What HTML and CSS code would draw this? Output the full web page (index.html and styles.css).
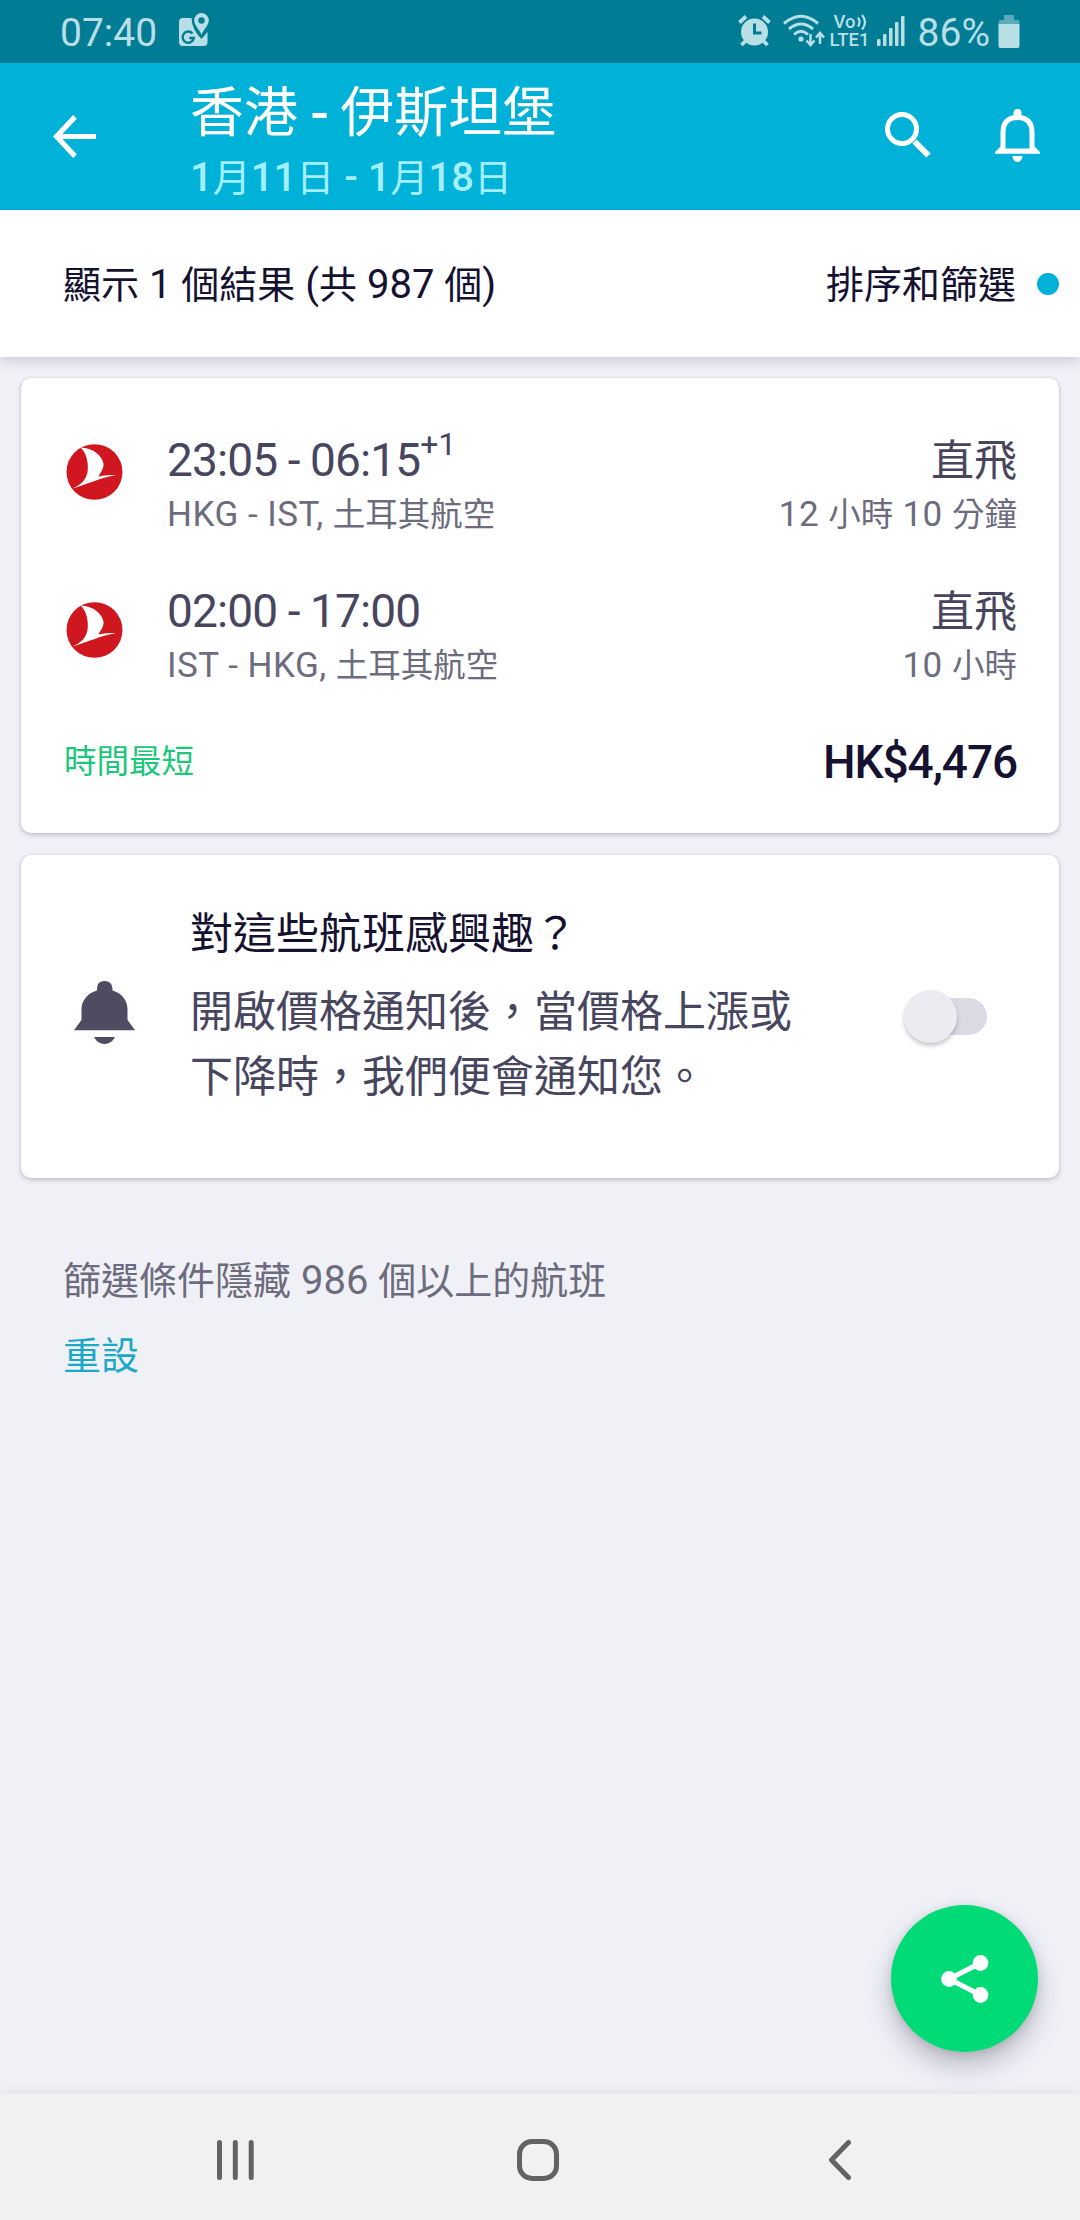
FILE: index.html
```html
<!DOCTYPE html>
<html lang="zh-Hant">
<head>
<meta charset="utf-8">
<title>香港 - 伊斯坦堡</title>
<link rel="stylesheet" href="styles.css">
</head>
<body>
<div class="screen">
  <div class="statusbar">
    <span class="clock">07:40</span>
    <svg class="ic-maps" width="32" height="38" viewBox="0 0 32 38" fill="currentColor">
      <path d="M4 5H12.500Q13 17 22.500 26L28.500 19V29Q28.500 33 25 33H4Q0 33 0 29V9Q0 5 4 5Z"/>
      <path d="M13.500 20.500A5.600 5.600 0 1 0 14.800 25H10.300" fill="none" stroke="#007c95" stroke-width="2.400"/>
      <path fill-rule="evenodd" d="M22.500 0A7.300 7.300 0 0 1 29.800 7.300C29.800 13 24.500 16 22.500 22C20.500 16 15.200 13 15.200 7.300A7.300 7.300 0 0 1 22.500 0ZM22.500 4.300A3.200 3.200 0 1 0 22.500 10.700A3.200 3.200 0 1 0 22.500 4.300Z"/>
    </svg>
    <div class="status-right">
      <svg class="ic-alarm" width="33" height="32" viewBox="0 0 33 32">
        <g fill="none" stroke="currentColor" stroke-width="3.800">
          <path d="M1.500 7.500L8 1.500M31.500 7.500L25 1.500M7.500 26L3.500 30M25.500 26L29.500 30"/>
        </g>
        <circle cx="16.500" cy="17" r="13.500" fill="currentColor"/>
        <path d="M16.500 8.500V18H23.500" fill="none" stroke="#007c95" stroke-width="3"/>
      </svg>
      <svg class="ic-wifi" width="43" height="34" viewBox="0 0 43 34" fill="none" stroke="currentColor" stroke-width="3">
        <path d="M1 9.500Q18 -5 35 9.500M6 15Q18 5 30 15M11 20.500Q18 14 25 20.500"/>
        <circle cx="18" cy="25" r="2.600" fill="currentColor" stroke="none"/>
        <path d="M27.500 20V30M23.500 26.500L27.500 31L31.500 26.500M37 30V20M33 23.500L37 19L41 23.500" stroke-width="2.500"/>
      </svg>
      <div class="volte"><span class="vo">Vo<svg width="11" height="16" viewBox="0 0 11 16" fill="none" stroke="currentColor" stroke-width="2.200"><path d="M1 3.500Q4 8 1 12.500M5 1Q11 8 5 15.500"/></svg></span><span>LTE1</span></div>
      <svg class="ic-signal" width="28" height="30" viewBox="0 0 28 30" fill="currentColor">
        <rect x="0" y="23" width="3.500" height="7" rx="1"/><rect x="6" y="18" width="3.500" height="12" rx="1"/><rect x="12" y="12" width="3.500" height="18" rx="1"/><rect x="18" y="6" width="3.500" height="24" rx="1"/><rect x="24" y="0" width="3.500" height="30" rx="1"/>
      </svg>
      <span class="percent">86%</span>
      <svg class="ic-battery" width="22" height="33" viewBox="0 0 22 33">
        <path d="M6 0H16V5H19.500Q21.500 5 21.500 7V9H0.500V7Q0.500 5 2.500 5H6Z" fill="#5baabb"/>
        <path d="M0.500 9H21.500V31Q21.500 33 19.500 33H2.500Q0.500 33 0.500 31Z" fill="currentColor"/>
      </svg>
    </div>
  </div>

  <header class="appbar">
    <svg class="ic-back" width="43" height="43" viewBox="0 0 43 43" fill="none" stroke="#fff" stroke-width="5.200"><path d="M43 21.500H4M22 1.900L3.500 21.500L22 41.100"/></svg>
    <div class="route">
      <h1 class="route-title">香港<b> - </b>伊斯坦堡</h1>
      <p class="route-dates"><b>1</b>月<b>11</b>日<b> - 1</b>月<b>18</b>日</p>
    </div>
    <svg class="ic-search" width="46" height="46" viewBox="0 0 46 46" fill="none" stroke="#fff"><circle cx="17" cy="17" r="14.500" stroke-width="5"/><path d="M29.500 29.500L43.500 43.500" stroke-width="6"/></svg>
    <svg class="ic-bell" width="45" height="53" viewBox="0 0 45 53"><path d="M8 41V23.500Q8 8.500 22.500 8.500Q37 8.500 37 23.500V41" fill="none" stroke="#fff" stroke-width="5"/><path fill="#fff" d="M18.500 8V4Q18.500 0 22.500 0T26.500 4V8ZM0 43L7 36V39.500H38V36L45 43V44.700H0ZM17.300 47H27.700Q26.500 53 22.500 53T17.300 47Z"/></svg>
  </header>

  <div class="filterbar">
    <span>顯示<span class="latin"> 1 </span>個結果<span class="latin"> (</span>共<span class="latin"> 987 </span>個<span class="latin">)</span></span>
    <span class="sort">排序和篩選</span>
    <i class="dot"></i>
  </div>

  <main class="content">
    <section class="card itinerary">
      <div class="leg">
        <svg class="logo" width="60" height="60" viewBox="0 0 60 60"><ellipse cx="30.500" cy="30" rx="28" ry="27.800" fill="#d0161e"/><path fill="#fff" d="M16.500 5.500C30 6 38 14 39.500 21.500C40 27 36 31 34.500 34.500C39 33.500 45 32.500 51.500 33.200C38 35 24 42 8.500 46.500C17 43 22 38 23.500 30C25 21 22 10 16.500 5.500Z"/></svg>
        <div class="leg-main">
          <div class="time">23:05 - 06:15<sup>+1</sup></div>
          <div class="sub"><span class="latin">HKG - IST, </span>土耳其航空</div>
        </div>
        <div class="leg-side">
          <div class="stops">直飛</div>
          <div class="sub"><span class="latin">12 </span>小時<span class="latin"> 10 </span>分鐘</div>
        </div>
      </div>
      <div class="leg">
        <svg class="logo logo-low" width="60" height="60" viewBox="0 0 60 60"><ellipse cx="30.500" cy="30" rx="28" ry="27.800" fill="#d0161e"/><path fill="#fff" d="M16.500 5.500C30 6 38 14 39.500 21.500C40 27 36 31 34.500 34.500C39 33.500 45 32.500 51.500 33.200C38 35 24 42 8.500 46.500C17 43 22 38 23.500 30C25 21 22 10 16.500 5.500Z"/></svg>
        <div class="leg-main">
          <div class="time">02:00 - 17:00</div>
          <div class="sub"><span class="latin">IST - HKG, </span>土耳其航空</div>
        </div>
        <div class="leg-side">
          <div class="stops">直飛</div>
          <div class="sub"><span class="latin">10 </span>小時</div>
        </div>
      </div>
      <div class="summary">
        <span class="tag">時間最短</span>
        <span class="price">HK$4,476</span>
      </div>
    </section>

    <section class="card alert">
      <svg class="ic-alert" width="61" height="64" viewBox="0 0 61 64" fill="#504b60"><path d="M23 9.500V7.500Q23 0 30.500 0T38.500 7.500V9.500C48 12 53.500 20 53.500 28V39L61 49.300H0L7.500 39V28C7.500 20 13.500 12 23 9.500ZM20 56H41Q37.500 63 30.500 63T20 56Z"/></svg>
      <div class="alert-text">
        <h2 class="alert-title">對這些航班感興趣？</h2>
        <p class="alert-body">開啟價格通知後，當價格上漲或<br>下降時，我們便會通知您。</p>
      </div>
      <div class="toggle"><i class="thumb"></i></div>
    </section>

    <div class="hidden-note">
      <p>篩選條件隱藏<span class="latin"> 986 </span>個以上的航班</p>
      <a class="reset">重設</a>
    </div>
  </main>

  <nav class="navbar">
    <svg width="37" height="42" viewBox="0 0 37 42" fill="none" stroke="#636363" stroke-width="5" stroke-linecap="round"><path d="M2.500 3.500V38.500M18.300 3.500V38.500M34.200 3.500V38.500"/></svg>
    <svg class="ic-home" width="42" height="42" viewBox="0 0 42 42" fill="none" stroke="#636363" stroke-width="5"><rect x="2.500" y="2.500" width="37" height="37" rx="12.500"/></svg>
    <svg width="24" height="42" viewBox="0 0 24 42" fill="none" stroke="#636363" stroke-width="5" stroke-linecap="round" stroke-linejoin="round"><path d="M20.500 3.500L3.500 21L20.500 38.500"/></svg>
  </nav>

  <div class="fab"><svg width="48" height="48" viewBox="0 0 48 48"><path d="M39.500 8L8 24L39.500 40" fill="none" stroke="#fff" stroke-width="5"/><g fill="#fff"><circle cx="8" cy="24" r="7.900"/><circle cx="39.500" cy="8" r="7.900"/><circle cx="39.500" cy="40" r="7.900"/></g></svg></div>
</div>
</body>
</html>
```
FILE: styles.css
```css
* { box-sizing: border-box; }
body, h1, h2, p { margin: 0; }
body {
  font-family: Roboto, "Noto Sans CJK TC", sans-serif;
  font-weight: 400;
  color: #151130;
}
svg { display: block; flex: none; }
.screen {
  position: relative;
  display: flex;
  flex-direction: column;
  width: 1080px;
  height: 2220px;
  overflow: hidden;
  background: #f0f1f7;
}
.latin { font-size: 40px; line-height: 1; }

.statusbar {
  display: flex;
  align-items: flex-start;
  height: 63px;
  padding: 0 60px 0 60px;
  background: #007c95;
  color: #b9dfe6;
}
.clock, .percent { font-size: 39px; line-height: 67px; white-space: nowrap; }
.ic-maps { margin: 13px 0 0 22px; }
.status-right { display: flex; margin-left: auto; }
.ic-alarm { margin-top: 15px; }
.ic-wifi { margin: 14px 0 0 12px; }
.volte {
  display: flex;
  flex-direction: column;
  width: 42px;
  margin: 13px 0 0 4px;
  font-size: 18.500px;
  font-weight: 500;
  line-height: 18px;
}
.vo { display: flex; padding-left: 4px; }
.vo svg { margin: 1px 0 0 1px; }
.ic-signal { margin: 16px 0 0 5px; }
.percent { margin-left: 13px; }
.ic-battery { margin: 15px 0 0 8px; }

.appbar {
  position: relative;
  display: flex;
  align-items: flex-start;
  height: 147px;
  padding: 0 40px 0 53px;
  background: #00b2d8;
  color: #fff;
  z-index: 1;
}
.ic-back { margin-top: 52px; }
.route { flex: 1; padding-left: 94px; padding-top: 11px; }
.route-title { font-size: 54px; font-weight: 400; line-height: 80px; }
.route-title b { font-weight: 500; letter-spacing: -1px; }
.route-dates { font-size: 38px; line-height: 48px; color: #a3effd; }
.route-dates b { font-size: 40px; font-weight: 500; line-height: 1; }
.ic-search { margin-top: 49px; }
.ic-bell { margin: 46px 0 0 64px; }

.filterbar {
  display: flex;
  align-items: center;
  height: 147px;
  padding: 3px 21px 0 63px;
  background: #fff;
  box-shadow: 0 2px 14px rgba(30, 30, 50, .22);
  font-size: 38px;
  line-height: 50px;
}
.sort { margin-left: auto; }
.dot {
  width: 22px;
  height: 22px;
  margin: -3px 0 0 21px;
  border-radius: 50%;
  background: #00b2d8;
}

.content { flex: 1; padding: 21px; }
.card {
  border-radius: 10px;
  background: #fff;
  box-shadow: 0 2px 5px rgba(30, 30, 50, .22), 0 0 2px rgba(30, 30, 50, .14);
}
.itinerary { height: 455px; padding: 54px 42px 0 43px; }
.leg { display: flex; height: 151px; }
.logo { margin-top: 10px; }
.logo-low { margin-top: 17px; }
.leg-main { flex: 1; padding-left: 43px; }
.leg-side { text-align: right; }
.time, .stops { font-size: 43px; line-height: 58px; color: #48465f; }
.time { font-size: 46px; line-height: 57px; letter-spacing: -.88px; }
.time sup { font-size: 32px; line-height: 0; letter-spacing: 0; vertical-align: 21px; }
.sub { margin-top: 3px; font-size: 32.500px; line-height: 46px; color: #6d6b7e; }
.stops + .sub { margin-top: 2px; }
.sub .latin { font-size: 35px; letter-spacing: .5px; }
.summary { display: flex; align-items: center; justify-content: space-between; height: 56px; }
.tag { margin-top: -8px; font-size: 32.500px; color: #1cc67b; }
.price { font-size: 46px; font-weight: 500; letter-spacing: -1.1px; }

.alert { display: flex; height: 323px; margin-top: 22px; padding: 0 72px 0 53px; }
.ic-alert { margin-top: 126px; }
.alert-text { flex: 1; padding: 47px 0 0 55px; }
.alert-title { font-size: 43px; font-weight: 400; line-height: 65px; }
.alert-body { padding-top: 13px; font-size: 43px; line-height: 65px; color: #48465f; white-space: nowrap; }
.toggle {
  width: 74px;
  height: 37px;
  margin-top: 143px;
  border-radius: 19px;
  background: #dadae4;
}
.thumb {
  display: block;
  width: 53px;
  height: 53px;
  margin: -8px 0 0 -9px;
  border-radius: 50%;
  background: #ebecf2;
  box-shadow: 0 3px 4px rgba(0, 0, 0, .22);
}

.hidden-note { padding: 78px 42px 0; font-size: 38px; line-height: 50px; color: #6d6b7e; }
.reset { display: block; padding-top: 25px; color: #1ca8c8; }

.navbar {
  display: flex;
  align-items: center;
  justify-content: space-between;
  height: 126px;
  padding: 5px 228px 0 217px;
  background: #f1f1f1;
  box-shadow: 0 -2px 10px rgba(30, 30, 50, .07);
}
.ic-home { margin-right: 6px; }
.fab {
  position: absolute;
  left: 891px;
  top: 1905px;
  display: flex;
  align-items: center;
  justify-content: center;
  width: 147px;
  height: 147px;
  border-radius: 50%;
  background: #00da77;
  box-shadow: 0 14px 26px rgba(30, 30, 50, .26), 0 2px 10px rgba(30, 30, 50, .12);
}
```
